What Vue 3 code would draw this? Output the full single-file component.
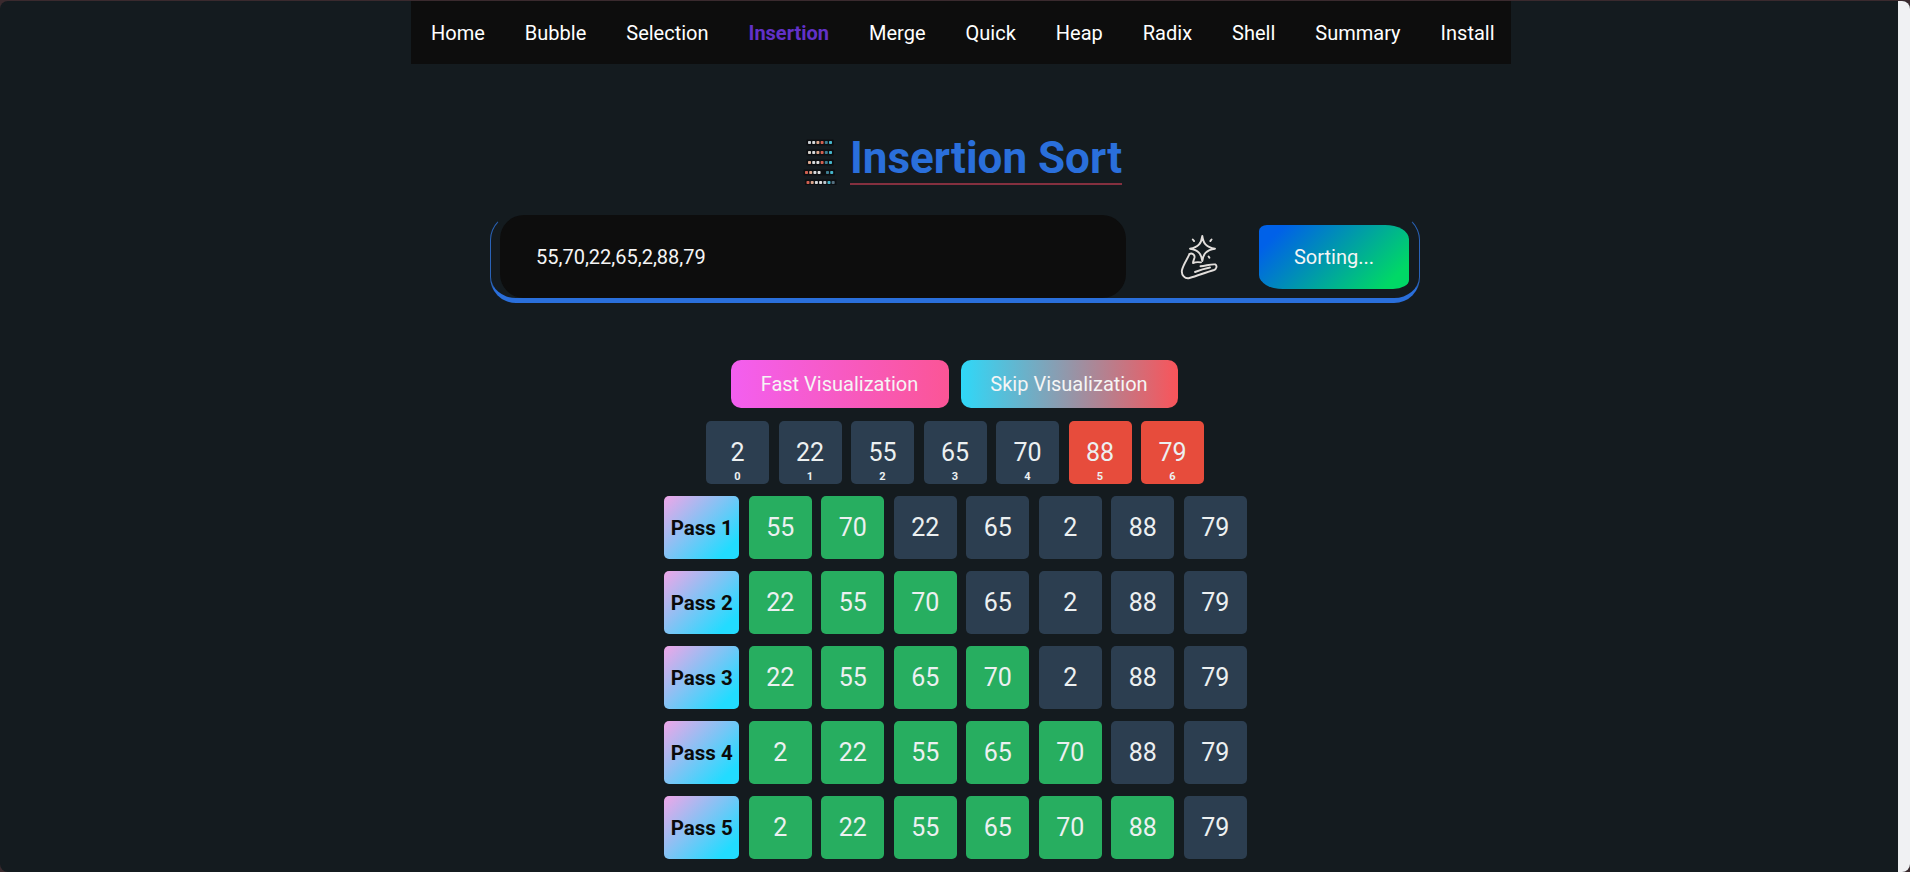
<template>
  <div class="page">
    <main class="main">
      <nav class="nav">
        <a v-for="item in navItems" :key="item" class="nav-link" :class="{ active: item === 'Insertion' }">{{ item }}</a>
      </nav>

      <header class="title-row">
        <svg class="logo" width="62" height="51" viewBox="0 0 62 51">
          <g v-for="(row, r) in logoRows" :key="r">
            <rect :x="row.x - 1.5" :y="5.500 + r * 10" :width="row.colors.length * 4.2 + 2" height="6" fill="#0c0f12" rx="1" />
            <rect
              v-for="(color, c) in row.colors"
              :key="c"
              :x="row.x + c * 4.2"
              :y="7 + r * 10"
              width="3"
              height="3"
              rx="0.8"
              :fill="color"
            />
          </g>
        </svg>
        <h1 class="title">Insertion Sort</h1>
      </header>

      <div class="input-shell">
        <div class="input-box">55,70,22,65,2,88,79</div>
        <div class="magic">
          <svg width="40" height="48" viewBox="0 0 40 48" fill="none" stroke="#e2dedb" stroke-width="1.900" stroke-linecap="round" stroke-linejoin="round">
            <path d="M22.300 3c1 7.500 4 11.500 12.700 12.700-8.700 1.300-11.700 5-12.700 12.300-1-7.300-4-11-12.300-12.300 8.300-1.200 11.300-5.200 12.300-12.700z" />
            <path d="M12.800 6.500l1.300 1.600M31.500 6.500l-1.200 1.600M28.600 23.500l.8 1.300" />
            <path d="M9.500 21C7.500 26 3.500 31 2 37c-1 5 3 9.200 7.500 8 8-2.300 16-5.500 24.500-8 2.500-.8 3.500-4.300 1.200-5.600-4.500-.5-9.500 1.600-14.700 1.900" />
            <path d="M9.500 21c2.200-1.200 5.500.2 5 3.500-.4 2-1.500 3.800-1.500 5.500 3-1.200 5.500-1 8-.6" />
            <path d="M15 39c5-2 10-3.500 15-4.500" />
          </svg>
        </div>
        <button class="sort-btn" type="button">Sorting...</button>
      </div>

      <div class="speed-row">
        <button class="speed-btn fast" type="button">Fast Visualization</button>
        <button class="speed-btn skip" type="button">Skip Visualization</button>
      </div>

      <div class="row current">
        <div v-for="(cell, i) in current" :key="i" class="cell" :class="{ red: i >= 5 }">
          <span>{{ cell }}</span>
          <small class="index">{{ i }}</small>
        </div>
      </div>

      <div v-for="pass in passes" :key="pass.n" class="row pass-row">
        <div class="pass-label">Pass {{ pass.n }}</div>
        <div v-for="(cell, i) in pass.values" :key="i" class="cell" :class="{ green: i < pass.sorted }">{{ cell }}</div>
      </div>
    </main>
    <div class="track"></div>
  </div>
</template>

<script setup>
const navItems = ['Home', 'Bubble', 'Selection', 'Insertion', 'Merge', 'Quick', 'Heap', 'Radix', 'Shell', 'Summary', 'Install']

const current = [2, 22, 55, 65, 70, 88, 79]

const passes = [
  { n: 1, sorted: 2, values: [55, 70, 22, 65, 2, 88, 79] },
  { n: 2, sorted: 3, values: [22, 55, 70, 65, 2, 88, 79] },
  { n: 3, sorted: 4, values: [22, 55, 65, 70, 2, 88, 79] },
  { n: 4, sorted: 5, values: [2, 22, 55, 65, 70, 88, 79] },
  { n: 5, sorted: 6, values: [2, 22, 55, 65, 70, 88, 79] },
]

const logoRows = [
  { x: 20, colors: ['#c9ced2', '#d5d8da', '#d9a58c', '#cf5f4f', '#3f7f93', '#45b6cc'] },
  { x: 20, colors: ['#d5d0c8', '#d5d8da', '#d9a58c', '#cf5f4f', '#3f7f93', '#45b6cc'] },
  { x: 20, colors: ['#dca88e', '#d5d8da', '#dddddd', '#cf5f4f', '#3f7f93', '#45b6cc'] },
  { x: 17, colors: ['#cf5f4f', '#d9a58c', '#d5d8da', '#dddddd', 'none', '#3f7f93', '#45b6cc'] },
  { x: 18.500, colors: ['#cf5f4f', '#d9a58c', '#d5d8da', '#dddddd', '#bcc6cc', '#45b6cc', '#557080'] },
]
</script>

<style scoped>
.page {
  height: 871px;
  margin-top: 1px;
  overflow: hidden;
  border-radius: 8px;
  display: flex;
  background: #141b1f;
  color: #fff;
  font-family: Roboto, "Liberation Sans", sans-serif;
}
.main {
  flex: 1;
  min-width: 0;
  padding-left: 12px;
  display: flex;
  flex-direction: column;
  align-items: center;
}
.track {
  width: 12px;
  flex: none;
  background: #f0f1f3;
}
.nav {
  width: 1100px;
  height: 63px;
  margin-left: 11px;
  padding-left: 20.500px;
  box-sizing: border-box;
  background: #0d0d0d;
  display: flex;
  align-items: center;
  gap: 40px;
  white-space: nowrap;
  flex: none;
}
.nav-link {
  font-size: 20px;
  color: #fff;
}
.nav-link.active {
  color: #6231c8;
  font-weight: 700;
}
.title-row {
  display: flex;
  align-items: flex-start;
  margin-top: 70px;
  flex: none;
}
.logo {
  flex: none;
}
.title {
  margin: 0;
  font-size: 44px;
  line-height: 49px;
  font-weight: 700;
  color: #2a6fdb;
  border-bottom: 2px solid #84303f;
}
.input-shell {
  width: 930px;
  height: 89px;
  margin-top: 29px;
  box-sizing: border-box;
  border-radius: 26px;
  border-bottom: 5px solid #2a6fdb;
  border-left: 1.500px solid #2a63b8;
  border-right: 1.500px solid #2a63b8;
  border-top: 1px solid transparent;
  display: flex;
  align-items: flex-start;
  flex: none;
}
.input-box {
  width: 626px;
  height: 83px;
  margin-left: 9px;
  padding-left: 36px;
  box-sizing: border-box;
  background: #0d0d0d;
  border-radius: 24px;
  font-size: 20px;
  line-height: 85px;
  color: #f5f5f5;
  flex: none;
}
.magic {
  width: 133px;
  height: 83px;
  padding-left: 15px;
  box-sizing: border-box;
  display: flex;
  align-items: center;
  justify-content: center;
  flex: none;
}
.sort-btn {
  width: 150px;
  height: 64px;
  margin-top: 10px;
  border: none;
  border-radius: 8px 24px 16px 24px / 6px 14px 9px 14px;
  background: linear-gradient(135deg, #0061e8 12%, #00d866 88%);
  color: #f5f5f5;
  font: 20px Roboto, "Liberation Sans", sans-serif;
  flex: none;
}
.speed-row {
  display: flex;
  gap: 12px;
  margin-top: 57px;
  margin-left: -2px;
  flex: none;
}
.speed-btn {
  width: 218px;
  height: 48px;
  padding: 0;
  border: none;
  border-radius: 10px;
  color: #f5f5f5;
  font: 20px Roboto, "Liberation Sans", sans-serif;
}
.skip {
  width: 217px;
}
.fast {
  background: linear-gradient(90deg, #f35ff0, #fb5596);
}
.skip {
  background: linear-gradient(90deg, #2fd8f8, #f9545a);
}
.row {
  display: flex;
  gap: 9.500px;
  margin-top: 12px;
  flex: none;
}
.pass-row {
  margin-left: 1px;
}
.current {
  margin-top: 13px;
}
.cell {
  width: 63px;
  height: 63px;
  border-radius: 5px;
  background: #2c3e50;
  color: #ecf0f1;
  font-size: 25px;
  position: relative;
  display: flex;
  align-items: center;
  justify-content: center;
}
.cell.green {
  background: #27ae60;
}
.cell.red {
  background: #e74c3c;
}
.index {
  position: absolute;
  bottom: 1px;
  left: 0;
  right: 0;
  text-align: center;
  font-size: 11px;
  font-weight: 700;
}
.pass-label {
  width: 75px;
  height: 63px;
  border-radius: 5px;
  background: linear-gradient(135deg, #f0a6e8, #22dcff 85%);
  color: #0a0a0a;
  font-size: 20.500px;
  font-weight: 700;
  white-space: nowrap;
  display: flex;
  align-items: center;
  justify-content: center;
}
</style>

<style>
html,
body {
  margin: 0;
  background: #3a2a2e;
}
</style>
